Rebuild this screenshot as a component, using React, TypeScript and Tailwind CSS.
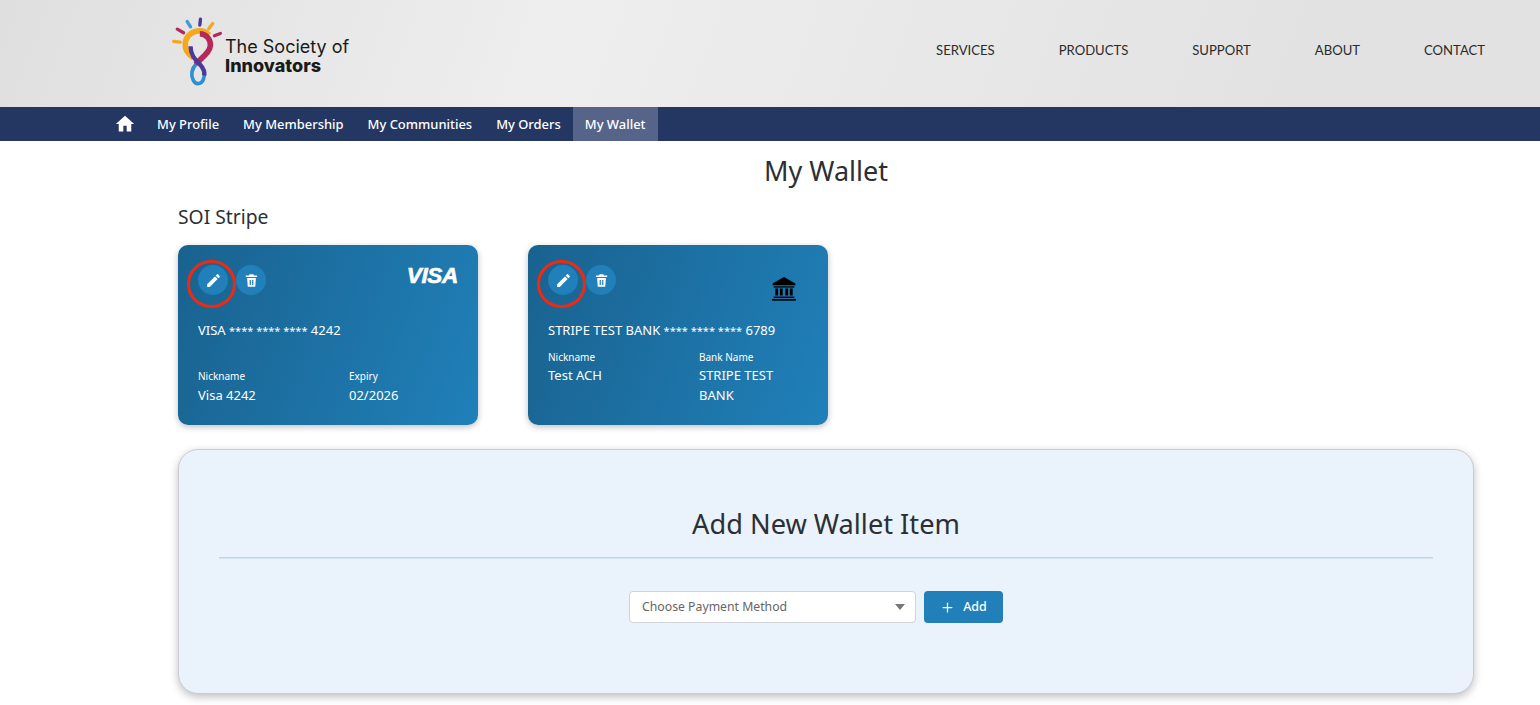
import React from "react";
import { Plus } from "lucide-react";

const font = { fontFamily: '"Noto Sans", sans-serif' };

function HomeIcon() {
  return (
    <svg viewBox="0 0 24 24" className="h-[20px] w-[20px] fill-white">
      <path d="M10 21v-7h4v7h5.5v-9H23L12 2 1 12h3.5v9z" />
    </svg>
  );
}

function Pencil() {
  return (
    <svg viewBox="0 0 24 24" className="h-[17px] w-[17px] fill-white">
      <path d="M3 17.25V21h3.75L17.81 9.94l-3.75-3.75L3 17.25zM20.71 7.04a1 1 0 0 0 0-1.41l-2.34-2.34a1 1 0 0 0-1.41 0l-1.83 1.83 3.75 3.75 1.83-1.83z" />
    </svg>
  );
}

function Trash() {
  return (
    <svg viewBox="0 0 24 24" className="h-[15px] w-[15px] fill-white">
      <path fillRule="evenodd" d="M9 2h6l1 2h5v2.5H3V4h5l1-2zM5 8h14l-1 14H6L5 8zm4 3v8h2v-8H9zm4 0v8h2v-8h-2z" />
    </svg>
  );
}

function Bank() {
  return (
    <svg viewBox="0 0 24 24" className="h-[26px] w-[26px] fill-black">
      <path d="M12 1 1.5 7v1.5h21V7L12 1z" />
      <rect x="2.5" y="9.5" width="19" height="1.2" />
      <rect x="4" y="11.5" width="2.6" height="6.5" />
      <rect x="8.2" y="11.5" width="2.6" height="6.5" />
      <rect x="13.2" y="11.5" width="2.6" height="6.5" />
      <rect x="17.4" y="11.5" width="2.6" height="6.5" />
      <rect x="2.5" y="19" width="19" height="1.3" />
      <rect x="1" y="21.2" width="22" height="1.6" />
    </svg>
  );
}

function Logo() {
  return (
    <div className="flex items-start">
      <svg viewBox="60 50 160 210" className="h-[70px] w-[53px] shrink-0">
        <g fill="none" strokeLinecap="round">
          <g strokeWidth="10">
            <path d="M71 123l20 2" stroke="#f5a81c" />
            <path d="M82 86l19 11" stroke="#b5295a" />
            <path d="M112 63l10 16" stroke="#3f9bd5" />
            <path d="M152 56l-2 18" stroke="#4b3a9a" />
            <path d="M189 69l-12 16" stroke="#f5a81c" />
            <path d="M212 99l-18 7" stroke="#b5295a" />
          </g>
          <path d="M130 172C112 160 104 148 106 128 109 104 130 91 150 91 160 91 170 95 178 104" stroke="#f5a81c" strokeWidth="17" strokeLinecap="butt" />
          <path d="M140 190C125 205 122 225 130 240 140 258 160 252 163 228 165 215 160 205 155 198" stroke="#2f8fd0" strokeWidth="11" strokeLinecap="butt" />
          <path d="M150 100C170 100 183 118 182 135 180 160 150 175 138 192" stroke="#b5295a" strokeWidth="17" strokeLinecap="butt" />
          <path d="M122 138C122 165 136 178 150 192 160 203 166 214 163 226" stroke="#4b3a9a" strokeWidth="13" strokeLinecap="butt" />
        </g>
      </svg>
      <div className="ml-[2px] mt-[20px] text-[#1a1a1a]" style={{ fontFamily: '"Inter", sans-serif' }}>
        <div className="text-[18px] leading-[19px] whitespace-nowrap">The Society of</div>
        <div className="text-[18px] font-extrabold leading-[19px]">Innovators</div>
      </div>
    </div>
  );
}

function Stars() {
  return <span className="text-[11px]">**** **** ****</span>;
}

function Card({ children, icon }: { children: React.ReactNode; icon: React.ReactNode }) {
  return (
    <div className="h-[180px] w-[300px] rounded-[10px] bg-[linear-gradient(110deg,#19628f,#2080b9)] px-5 pt-5 text-white shadow-[0_2px_6px_rgba(0,0,0,0.25)]">
      <div className="flex items-start justify-between">
        <div className="flex gap-[8px]">
          <span className="relative flex h-[30px] w-[30px] items-center justify-center rounded-full bg-[#2180ba]">
            <Pencil />
            <span className="absolute -left-[11px] -top-[5px] h-[48px] w-[49px] rounded-full border-[3px] border-[#ee2a12]" />
          </span>
          <span className="flex h-[30px] w-[30px] items-center justify-center rounded-full bg-[#2180ba]">
            <Trash />
          </span>
        </div>
        {icon}
      </div>
      {children}
    </div>
  );
}

export default function App() {
  return (
    <div className="min-h-[705px] overflow-hidden bg-white text-[#2c2f33]" style={font}>
      <header className="flex h-[107px] items-start justify-between bg-[linear-gradient(110deg,#dfdfdf_0%,#eeeeee_36%,#e2e2e2_85%)] pl-[170px] pr-[55px]">
        <div className="pt-[17px]">
          <Logo />
        </div>
        <nav className="flex gap-[64px] pt-[41px] text-[13.1px] leading-[18px] text-[#2b2b2b]" style={{ fontFamily: '"Lato", sans-serif' }}>
          <span>SERVICES</span>
          <span>PRODUCTS</span>
          <span>SUPPORT</span>
          <span>ABOUT</span>
          <span>CONTACT</span>
        </nav>
      </header>

      <nav className="flex h-[34px] items-stretch bg-[#243763] pl-[105px] text-[12.95px] font-medium text-white">
        <span className="flex items-center px-[10px]">
          <HomeIcon />
        </span>
        <span className="flex items-center px-[12px] pt-px">My Profile</span>
        <span className="flex items-center px-[12px] pt-px">My Membership</span>
        <span className="flex items-center px-[12px] pt-px">My Communities</span>
        <span className="flex items-center px-[12px] pt-px">My Orders</span>
        <span className="flex items-center bg-[#56648a] px-[12px] pt-px">My Wallet</span>
      </nav>

      <main className="pl-[178px] pr-[66px]">
        <h1 className="pt-[12px] text-center text-[27px] leading-[36px]">My Wallet</h1>
        <h2 className="mt-[15px] text-[19.3px] leading-[26px]">SOI Stripe</h2>

        <div className="mt-[15px] flex gap-[50px]">
          <Card
            icon={
              <span
                className="-mt-[1px] text-[22.5px] font-bold italic leading-[24px] tracking-[-0.3px] [-webkit-text-stroke:0.6px_white]"
                style={{ fontFamily: '"Liberation Sans", sans-serif' }}
              >
                VISA
              </span>
            }
          >
            <div className="mt-[25px] text-[13px] leading-[20px]">
              VISA <Stars /> 4242
            </div>
            <div className="mt-[28px] grid grid-cols-[151px_1fr] text-[13px]">
              <div>
                <div className="text-[10px] leading-[14px]">Nickname</div>
                <div className="mt-[2px] leading-[20px]">Visa 4242</div>
              </div>
              <div>
                <div className="text-[10px] leading-[14px]">Expiry</div>
                <div className="mt-[2px] leading-[20px]">02/2026</div>
              </div>
            </div>
          </Card>
          <Card
            icon={
              <span className="mr-[11px] mt-[11px]">
                <Bank />
              </span>
            }
          >
            <div className="mt-[18px] text-[13px] leading-[20px] whitespace-nowrap">
              STRIPE TEST BANK <Stars /> 6789
            </div>
            <div className="mt-[9px] grid grid-cols-[151px_1fr] text-[13px]">
              <div>
                <div className="text-[10px] leading-[14px]">Nickname</div>
                <div className="mt-[1px] leading-[20px]">Test ACH</div>
              </div>
              <div>
                <div className="text-[10px] leading-[14px]">Bank Name</div>
                <div className="mt-[1px] w-[100px] leading-[20px]">STRIPE TEST BANK</div>
              </div>
            </div>
          </Card>
        </div>

        <section className="mt-[24px] h-[245px] rounded-[20px] border border-[#c9ccd0] bg-[#eaf2fb] px-[40px] pt-[55px] shadow-[0_3px_8px_rgba(0,0,0,0.25)]">
          <h2 className="text-center text-[27.2px] leading-[38px]">Add New Wallet Item</h2>
          <div className="mt-[14px] h-px bg-[#bcd4e6] shadow-[0_1px_0_#d5e5f2]" />
          <div className="mt-[33px] flex justify-center gap-[8px] pr-[20px]">
            <div className="flex h-[32px] w-[287px] items-center justify-between rounded-[4px] border border-[#d0d4d9] bg-white pl-[12px] pr-[10px] text-[12.25px] text-[#666]">
              <span>Choose Payment Method</span>
              <span className="h-0 w-0 border-x-[5.5px] border-t-[6px] border-x-transparent border-t-[#777]" />
            </div>
            <button className="flex h-[32px] w-[79px] items-center justify-center gap-[8px] rounded-[4px] bg-[#2180ba] text-[12.5px] font-medium text-white">
              <Plus size={15} />
              Add
            </button>
          </div>
        </section>
      </main>
    </div>
  );
}
